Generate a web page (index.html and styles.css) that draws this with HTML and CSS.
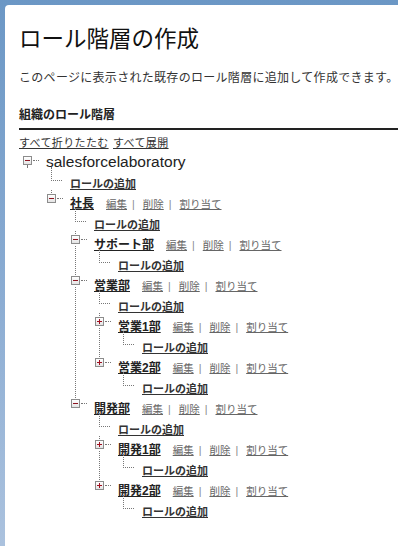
FILE: index.html
```html
<!DOCTYPE html>
<html lang="ja">
<head>
  <meta charset="UTF-8" />
  <meta name="viewport" content="width=device-width, initial-scale=1.0"/>
  <title>ロール階層の作成</title>
  <link rel="stylesheet" href="styles.css">
</head>
<body>
  <div class="page">
    <h1>ロール階層の作成</h1>
    <p class="intro">このページに表示された既存のロール階層に追加して作成できます。</p>
    <h2 class="section">組織のロール階層</h2>
    <div class="tools"><a href="#">すべて折りたたむ</a> <a href="#">すべて展開</a></div>

    <ul class="tree">
      <li class="node root">
        <div class="row"><span class="toggle minus"></span><span class="org">salesforcelaboratory</span></div>
        <ul>
          <li class="leaf"><div class="row"><a class="add" href="#">ロールの追加</a></div></li>
          <li class="node">
            <div class="row"><span class="toggle minus"></span><a class="role" href="#">社長</a><span class="actions"><a href="#">編集</a><span class="sep">|</span><a href="#">削除</a><span class="sep">|</span><a href="#">割り当て</a></span></div>
            <ul>
              <li class="leaf"><div class="row"><a class="add" href="#">ロールの追加</a></div></li>
              <li class="node more">
                <div class="row"><span class="toggle minus"></span><a class="role" href="#">サポート部</a><span class="actions"><a href="#">編集</a><span class="sep">|</span><a href="#">削除</a><span class="sep">|</span><a href="#">割り当て</a></span></div>
                <ul>
                  <li class="leaf"><div class="row"><a class="add" href="#">ロールの追加</a></div></li>
                </ul>
              </li>
              <li class="node more">
                <div class="row"><span class="toggle minus"></span><a class="role" href="#">営業部</a><span class="actions"><a href="#">編集</a><span class="sep">|</span><a href="#">削除</a><span class="sep">|</span><a href="#">割り当て</a></span></div>
                <ul>
                  <li class="leaf"><div class="row"><a class="add" href="#">ロールの追加</a></div></li>
                  <li class="node more">
                    <div class="row"><span class="toggle plus"></span><a class="role" href="#">営業1部</a><span class="actions"><a href="#">編集</a><span class="sep">|</span><a href="#">削除</a><span class="sep">|</span><a href="#">割り当て</a></span></div>
                    <ul>
                      <li class="leaf"><div class="row"><a class="add" href="#">ロールの追加</a></div></li>
                    </ul>
                  </li>
                  <li class="node">
                    <div class="row"><span class="toggle plus"></span><a class="role" href="#">営業2部</a><span class="actions"><a href="#">編集</a><span class="sep">|</span><a href="#">削除</a><span class="sep">|</span><a href="#">割り当て</a></span></div>
                    <ul>
                      <li class="leaf"><div class="row"><a class="add" href="#">ロールの追加</a></div></li>
                    </ul>
                  </li>
                </ul>
              </li>
              <li class="node">
                <div class="row"><span class="toggle minus"></span><a class="role" href="#">開発部</a><span class="actions"><a href="#">編集</a><span class="sep">|</span><a href="#">削除</a><span class="sep">|</span><a href="#">割り当て</a></span></div>
                <ul>
                  <li class="leaf"><div class="row"><a class="add" href="#">ロールの追加</a></div></li>
                  <li class="node more">
                    <div class="row"><span class="toggle plus"></span><a class="role" href="#">開発1部</a><span class="actions"><a href="#">編集</a><span class="sep">|</span><a href="#">削除</a><span class="sep">|</span><a href="#">割り当て</a></span></div>
                    <ul>
                      <li class="leaf"><div class="row"><a class="add" href="#">ロールの追加</a></div></li>
                    </ul>
                  </li>
                  <li class="node">
                    <div class="row"><span class="toggle plus"></span><a class="role" href="#">開発2部</a><span class="actions"><a href="#">編集</a><span class="sep">|</span><a href="#">削除</a><span class="sep">|</span><a href="#">割り当て</a></span></div>
                    <ul>
                      <li class="leaf"><div class="row"><a class="add" href="#">ロールの追加</a></div></li>
                    </ul>
                  </li>
                </ul>
              </li>
            </ul>
          </li>
        </ul>
      </li>
    </ul>
  </div>
</body>
</html>
```

FILE: styles.css
```css
body { margin: 0; min-height: 546px; overflow: hidden; background: linear-gradient(#6b97c5, #8cadd3 55%, #abc2de); font-family: "Liberation Sans", "Noto Sans CJK JP", sans-serif; color: #222; }
.page { margin: 5px 0 0 5px; min-height: 541px; box-sizing: border-box; padding: 17px 0 20px 14px; background: #fff; border-radius: 4px 0 0 0; }
h1 { margin: 0; font-family: "Noto Sans CJK JP", sans-serif; font-size: 22.5px; line-height: 30px; font-weight: normal; color: #111; }
.intro { margin: 17px 0 0; font-size: 12px; line-height: 18px; letter-spacing: 0.3px; color: #333; white-space: nowrap; }
.section { margin: 19px 0 0; padding-bottom: 4px; font-size: 12px; line-height: 18px; font-weight: bold; color: #222; border-bottom: 2px solid #222; }
.tools { margin-top: 5px; font-size: 11px; line-height: 16px; letter-spacing: 0.35px; }
.tools a { color: #333; }
.tools a + a { margin-left: 1px; }

/* tree */
.tree, .tree ul { list-style: none; margin: 0; padding: 0; }
.tree { margin-top: 1px; }
.tree ul { padding-left: 24px; }
.tree li { position: relative; }
.tree li.more::after { content: ""; position: absolute; left: 8px; top: 12px; bottom: 0; border-left: 1px dotted #777; }
.row { position: relative; height: 20.5px; line-height: 20.5px; white-space: nowrap; }
.leaf > .row { padding-left: 27px; }
.leaf > .row::before { content: ""; position: absolute; left: 8px; top: -6px; width: 10px; height: 13px; border-left: 1px dotted #777; border-bottom: 1px dotted #777; }

.toggle { display: inline-block; position: relative; vertical-align: top; box-sizing: border-box; width: 9px; height: 9px; margin: 1px 14px 0 4px; border: 1px solid #8c8c8c; background: linear-gradient(#fff, #e4e4e4); }
.toggle::before { content: ""; position: absolute; left: 3px; top: -5px; height: 3px; border-left: 1px dotted #777; }
.toggle::after { content: ""; position: absolute; left: 9px; top: 3px; width: 6px; border-top: 1px dotted #777; }
.minus { background: linear-gradient(#8e1420, #8e1420) center / 5px 1px no-repeat, linear-gradient(#fff, #e4e4e4); }
.plus { background: linear-gradient(#a01020, #a01020) center / 5px 1px no-repeat, linear-gradient(#a01020, #a01020) center / 1px 5px no-repeat, linear-gradient(#fff, #e4e4e4); }
.root > .row > .toggle { margin-top: 4px; }
.root > .row > .toggle::before { top: 8px; height: 2px; }

.org { font-size: 15.5px; color: #222; }
.role { font-size: 12px; font-weight: bold; color: #222; text-decoration: underline; }
.add { font-size: 11px; font-weight: bold; color: #333; text-decoration: underline; }
.actions { margin-left: 12px; font-size: 10.5px; color: #888; }
.actions a { color: #666; }
.sep { margin: 0 8px 0 5px; }
```
